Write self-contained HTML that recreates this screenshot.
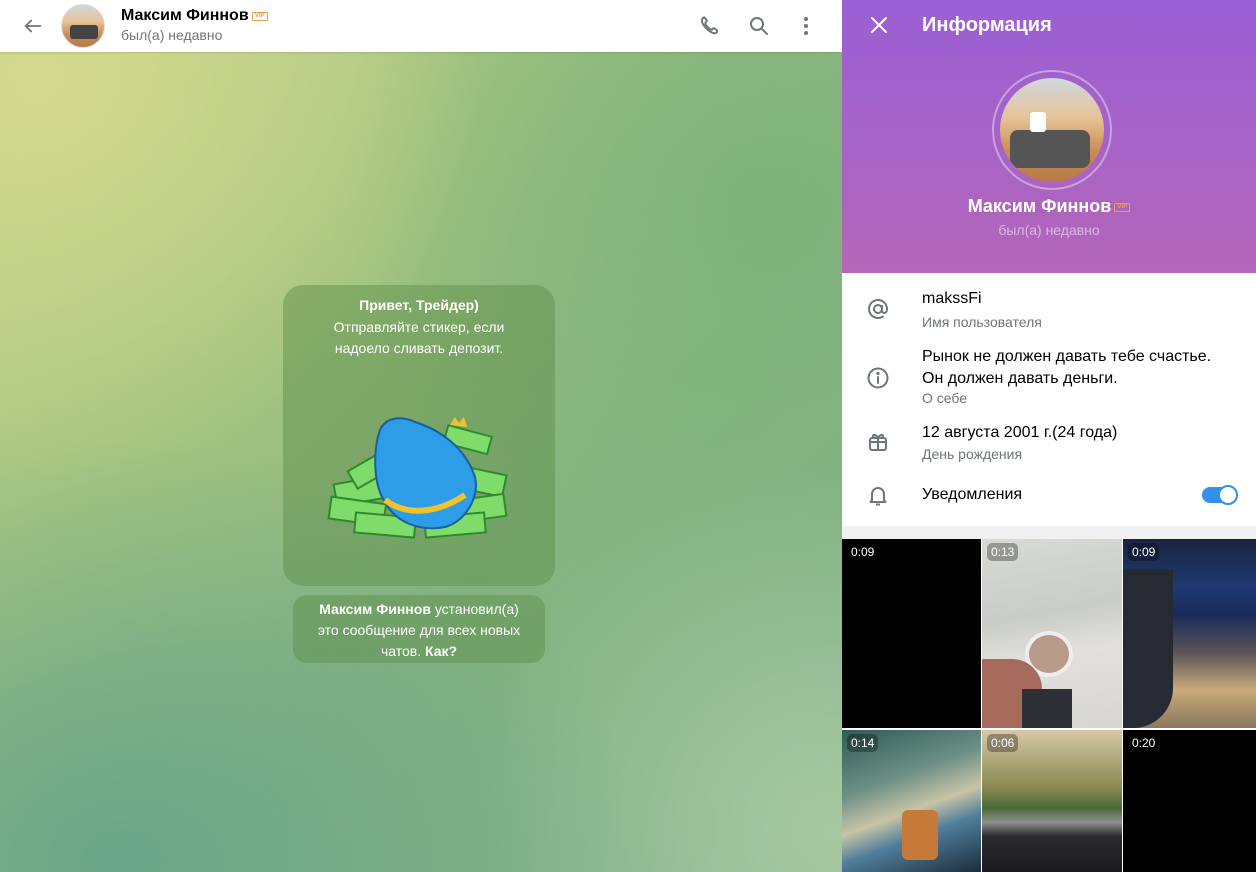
<!DOCTYPE html>
<html><head><meta charset="utf-8"><style>
*{margin:0;padding:0;box-sizing:border-box}
body{width:1256px;height:872px;overflow:hidden;font-family:"Liberation Sans",sans-serif;position:relative;background:#fff}
.chat{position:absolute;left:0;top:0;width:842px;height:872px;overflow:hidden;
background:
radial-gradient(ellipse 440px 400px at 40px 80px,#d2d98e 0%,rgba(210,217,142,0) 100%),
radial-gradient(ellipse 520px 420px at 120px 860px,#6aa58a 0%,rgba(106,165,138,0) 100%),
radial-gradient(ellipse 360px 360px at 830px 830px,#a8c9a2 0%,rgba(168,201,162,0) 100%),
radial-gradient(ellipse 420px 420px at 760px 200px,#7fb37c 0%,rgba(127,179,124,0) 100%),
linear-gradient(135deg,#c6d48a 0%,#a0c280 38%,#86b480 62%,#80b08c 100%)}
.hdr{position:absolute;left:0;top:0;width:842px;height:52px;background:#fff;box-shadow:0 1px 2px rgba(0,0,0,.12);z-index:2}
.name{position:absolute;left:121px;top:7px;font-size:16px;font-weight:bold;color:#000}
.vip{display:inline-block;width:16px;height:9px;border:1px solid #e2a14a;border-radius:1px;font-size:6px;color:#e2a14a;text-align:center;line-height:7px;vertical-align:3px;margin-left:3px;font-weight:bold}
.sub{position:absolute;left:121px;top:27px;font-size:14px;color:#707579}
.av{position:absolute;border-radius:50%;overflow:hidden;background:linear-gradient(180deg,#cfd8dc 0%,#e6c49a 38%,#c98d55 70%,#b47a48 100%)}
.bub{position:absolute;background:rgba(90,140,70,.45);border-radius:20px;color:#fff;text-align:center}
.panel{position:absolute;left:842px;top:0;width:414px;height:872px;background:#fff}
.ph{position:absolute;left:0;top:0;width:414px;height:273px;background:linear-gradient(180deg,#9a5fd4 0%,#a663c8 50%,#b466b7 100%)}
.row{position:absolute;left:80px;font-size:16px;color:#000}
.lbl{position:absolute;left:80px;font-size:14px;color:#707579}
.cell{position:absolute;overflow:hidden}
.dur{position:absolute;left:5px;top:4px;color:#fff;font-size:12px;padding:2px 4px;border-radius:5px;background:rgba(0,0,0,.3)}
</style></head><body>
<div class="chat">
 <div class="hdr">
  <svg style="position:absolute;left:22px;top:15px" width="22" height="22" viewBox="0 0 24 24" fill="none" stroke="#707579" stroke-width="2" stroke-linecap="round" stroke-linejoin="round"><path d="M20 12H4M10 6l-6 6 6 6"/></svg>
  <div class="av" style="left:61px;top:4px;width:44px;height:44px;border:1px solid #ddd"><div style="position:absolute;left:8px;top:20px;width:28px;height:14px;background:#444;border-radius:3px"></div></div>
  <div class="name">Максим Финнов<span class="vip">VIP</span></div>
  <div class="sub">был(а) недавно</div>
  <svg style="position:absolute;left:698px;top:14px" width="24" height="24" viewBox="0 0 24 24" fill="none" stroke="#707579" stroke-width="2" stroke-linecap="round"><path d="M5 4c-2 2-1 6 3 10s8 6 10 5c1-.5 1.5-2 .5-3l-2-1.5c-1-.7-2 .2-2.5 1-1 .3-3-1-4.5-2.5S7 9.5 7.5 8.5c.8-.5 1.7-1.5 1-2.5L7 4c-.7-1-1.5-.7-2 0z"/></svg>
  <svg style="position:absolute;left:747px;top:14px" width="24" height="24" viewBox="0 0 24 24" fill="none" stroke="#707579" stroke-width="2" stroke-linecap="round"><circle cx="10" cy="10" r="6"/><path d="M15 15l5 5"/></svg>
  <svg style="position:absolute;left:794px;top:14px" width="24" height="24" viewBox="0 0 24 24" fill="#707579"><circle cx="12" cy="5" r="2"/><circle cx="12" cy="12" r="2"/><circle cx="12" cy="19" r="2"/></svg>
 </div>
 <div class="bub" style="left:283px;top:285px;width:272px;height:301px">
  <div style="margin-top:12px;font-size:14px;font-weight:bold">Привет, Трейдер)</div>
  <div style="margin-top:4px;font-size:14px;line-height:21px">Отправляйте стикер, если<br>надоело сливать депозит.</div>
  <svg style="position:absolute;left:42px;top:125px" width="190" height="135" viewBox="0 0 190 135">
   <g fill="#7fdc6a" stroke="#2e8a2e" stroke-width="2">
    <rect x="10" y="70" width="50" height="22" transform="rotate(-10 35 80)"/>
    <rect x="5" y="90" width="55" height="22" transform="rotate(8 30 100)"/>
    <rect x="130" y="60" width="50" height="22" transform="rotate(12 155 70)"/>
    <rect x="125" y="88" width="55" height="22" transform="rotate(-8 150 98)"/>
    <rect x="30" y="105" width="60" height="20" transform="rotate(5 60 115)"/>
    <rect x="100" y="105" width="60" height="20" transform="rotate(-5 130 115)"/>
    <rect x="25" y="50" width="40" height="20" transform="rotate(-30 45 60)"/>
    <rect x="120" y="20" width="45" height="18" transform="rotate(15 140 30)"/>
   </g>
   <path d="M55 20c5-12 20-15 35-8 25 8 50 25 60 55 5 20-10 45-30 50-25 5-50-5-60-25C48 75 48 40 55 20z" fill="#2d9de8" stroke="#1a5f9c" stroke-width="2"/>
   <path d="M60 90c20 15 50 15 80-5" fill="none" stroke="#f2c12e" stroke-width="6"/>
   <path d="M125 15l5-8 4 6 5-6 3 10z" fill="#f2c12e"/>
  </svg>
 </div>
 <div class="bub" style="left:293px;top:595px;width:252px;height:68px;border-radius:14px;font-size:14px;line-height:21px;padding-top:4px">
  <b>Максим Финнов</b> установил(а)<br>это сообщение для всех новых<br>чатов. <b>Как?</b>
 </div>
</div>
<div class="panel">
 <div class="ph">
  <svg style="position:absolute;left:27px;top:15px" width="20" height="20" viewBox="0 0 20 20" stroke="#fff" stroke-width="2" stroke-linecap="round"><path d="M3 3l14 14M17 3L3 17"/></svg>
  <div style="position:absolute;left:80px;top:14px;font-size:20px;font-weight:bold;color:#fff">Информация</div>
  <div style="position:absolute;left:150px;top:70px;width:120px;height:120px;border-radius:50%;border:2px solid rgba(255,255,255,.4)"></div>
  <div class="av" style="left:158px;top:78px;width:104px;height:104px"><div style="position:absolute;left:10px;top:52px;width:80px;height:38px;background:#555;border-radius:8px"></div><div style="position:absolute;left:30px;top:34px;width:16px;height:20px;background:#fff;border-radius:3px"></div></div>
  <div style="position:absolute;left:0;width:414px;top:196px;text-align:center;font-size:18px;font-weight:bold;color:#fff">Максим Финнов<span class="vip" style="vertical-align:4px">VIP</span></div>
  <div style="position:absolute;left:0;width:414px;top:222px;text-align:center;font-size:14px;color:rgba(255,255,255,.55)">был(а) недавно</div>
 </div>
 <svg style="position:absolute;left:24px;top:297px" width="24" height="24" viewBox="0 0 24 24" fill="none" stroke="#707579" stroke-width="2"><circle cx="12" cy="12" r="4"/><path d="M16 8v5.5c0 1.5 1 2.5 2.3 2.5S21 15 21 12a9 9 0 10-3.5 7.1"/></svg>
 <div class="row" style="top:290px">makssFi</div>
 <div class="lbl" style="top:314px">Имя пользователя</div>
 <svg style="position:absolute;left:24px;top:366px" width="24" height="24" viewBox="0 0 24 24" fill="none" stroke="#707579" stroke-width="2" stroke-linecap="round"><circle cx="12" cy="12" r="9.5"/><path d="M12 11v6"/><circle cx="12" cy="7.5" r=".6" fill="#707579"/></svg>
 <div class="row" style="top:346px;line-height:22px">Рынок не должен давать тебе счастье.<br>Он должен давать деньги.</div>
 <div class="lbl" style="top:390px">О себе</div>
 <svg style="position:absolute;left:24px;top:429px" width="24" height="24" viewBox="0 0 24 24" fill="none" stroke="#707579" stroke-width="2"><rect x="4" y="9" width="16" height="12" rx="2"/><path d="M4 13h16M12 9v12M12 9c-2-4-6-4-5-1 .5 1 3 1 5 1zM12 9c2-4 6-4 5-1-.5 1-3 1-5 1z"/></svg>
 <div class="row" style="top:424px">12 августа 2001 г.(24 года)</div>
 <div class="lbl" style="top:446px">День рождения</div>
 <svg style="position:absolute;left:24px;top:483px" width="24" height="24" viewBox="0 0 24 24" fill="none" stroke="#707579" stroke-width="2" stroke-linejoin="round"><path d="M6 17V11a6 6 0 0112 0v6l1.5 2h-15z"/><path d="M10 21.5h4"/></svg>
 <div class="row" style="top:486px">Уведомления</div>
 <div style="position:absolute;left:360px;top:487px;width:33px;height:16px;border-radius:8px;background:#3390ec"></div>
 <div style="position:absolute;left:376px;top:485px;width:20px;height:20px;border-radius:50%;background:#fff;border:2px solid #3390ec"></div>
 <div style="position:absolute;left:0;top:526px;width:414px;height:13px;background:#f1f1f1"></div>
 <div class="cell" style="left:0;top:539px;width:139px;height:189px;background:#000"><span class="dur" style="background:none">0:09</span></div>
 <div class="cell" style="left:140px;top:539px;width:140px;height:189px;background:linear-gradient(170deg,#d8dad6 0%,#c9ccc8 40%,#e2e0dc 60%,#d8d6d2 100%)">
  <div style="position:absolute;left:43px;top:92px;width:48px;height:46px;border-radius:50%;background:#b89a88;border:4px solid #eee"></div>
  <div style="position:absolute;left:0;top:120px;width:60px;height:69px;background:#a76b5d;border-radius:0 30px 0 0"></div>
  <div style="position:absolute;left:40px;top:150px;width:50px;height:39px;background:#2d3036"></div>
  <span class="dur">0:13</span></div>
 <div class="cell" style="left:281px;top:539px;width:133px;height:189px;background:linear-gradient(180deg,#1b2340 0%,#1d3a72 25%,#1a2a58 40%,#5b5458 60%,#c9aa7a 80%,#8a7860 100%)">
  <div style="position:absolute;left:0;top:30px;width:50px;height:159px;background:#262a33;border-radius:0 0 40px 0"></div>
  <span class="dur">0:09</span></div>
 <div class="cell" style="left:0;top:730px;width:139px;height:142px;background:linear-gradient(160deg,#2f5c52 0%,#6d8f86 35%,#c8c4a6 55%,#4f7d9b 70%,#1d2c3a 100%)">
  <div style="position:absolute;left:60px;top:80px;width:36px;height:50px;background:#c57a3a;border-radius:6px"></div>
  <span class="dur">0:14</span></div>
 <div class="cell" style="left:140px;top:730px;width:140px;height:142px;background:linear-gradient(180deg,#d8c8a8 0%,#8a8a52 40%,#4a6a3a 55%,#8e8e8e 65%,#2a2a2c 75%,#1c1c1e 100%)"><span class="dur">0:06</span></div>
 <div class="cell" style="left:281px;top:730px;width:133px;height:142px;background:#000"><span class="dur" style="background:none">0:20</span></div>
</div>
</body></html>
